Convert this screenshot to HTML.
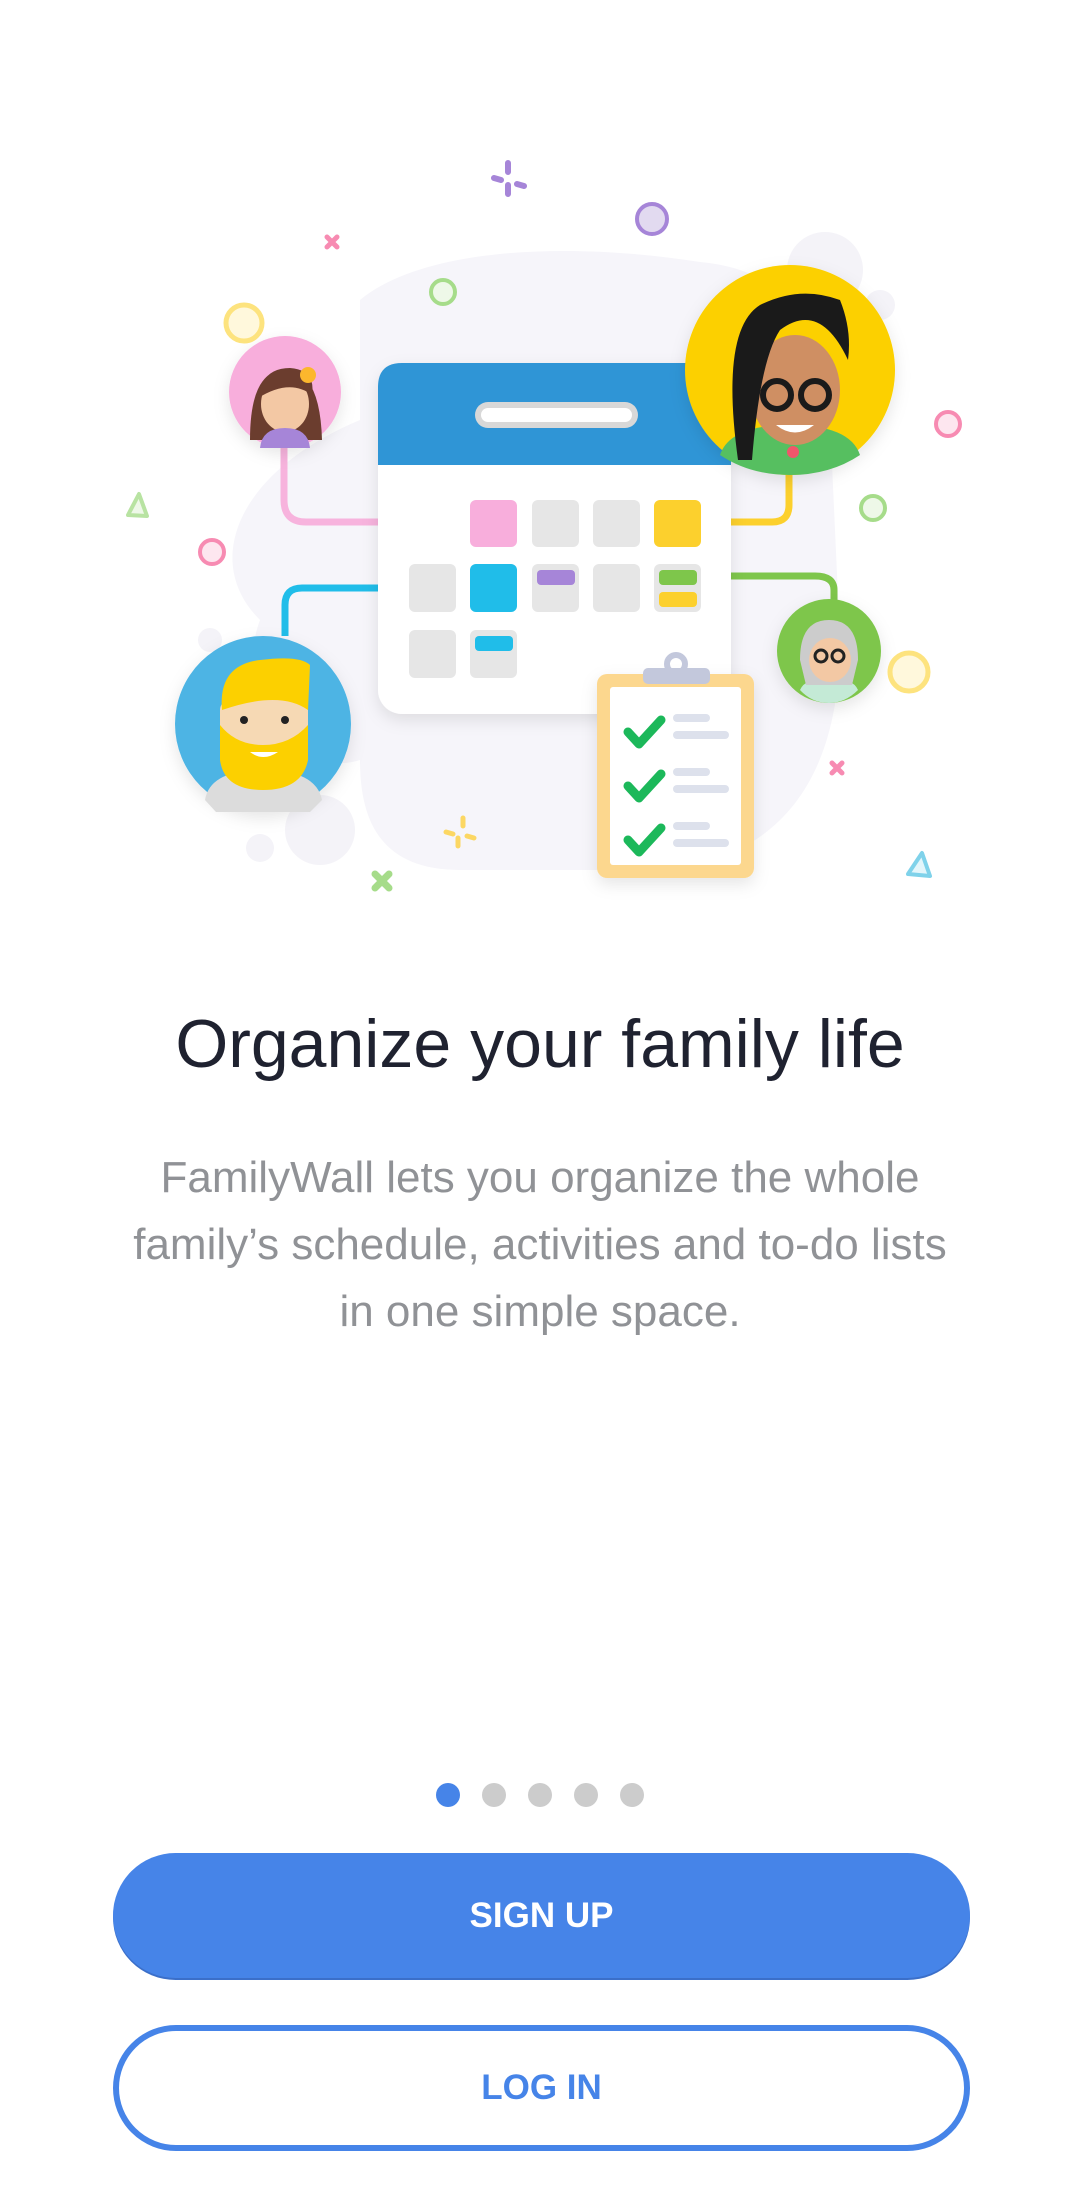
<!DOCTYPE html>
<html><head><meta charset="utf-8"><style>
html,body{margin:0;padding:0;background:#fff;}
body{width:1080px;height:2190px;position:relative;overflow:hidden;font-family:"Liberation Sans",Roboto,sans-serif;}
svg.ill{position:absolute;left:0;top:0;}
h1{position:absolute;top:1005px;left:0;width:1080px;text-align:center;margin:0;font-size:68px;font-weight:500;color:#1f2230;}
p.d{position:absolute;top:1144px;left:60px;width:960px;text-align:center;margin:0;font-size:44px;line-height:67px;color:#909296;}
.dots{position:absolute;top:1783px;left:0;width:1080px;text-align:center;font-size:0;}
.dots span{display:inline-block;width:24px;height:24px;border-radius:50%;background:#cccccc;margin:0 11px;}
.dots span.a{background:#4684e8;}
.btn{position:absolute;left:113px;width:857px;box-sizing:border-box;border-radius:64px;text-align:center;font-weight:bold;font-size:35px;}
.s{top:1853px;height:125px;line-height:125px;background:#4684e8;color:#fff;box-shadow:0 2px 0 #3b6fc9;}
.l{top:2025px;height:126px;line-height:114px;border:6px solid #4684e8;color:#4684e8;background:#fff;}
</style></head><body>
<svg class="ill" width="1080" height="900" viewBox="0 0 1080 900">
<defs><filter id="sh" x="-20%" y="-20%" width="140%" height="140%"><feDropShadow dx="0" dy="6" stdDeviation="8" flood-color="#000" flood-opacity="0.10"/></filter></defs>
<path d="M360 300 C420 250 560 240 700 262 C790 270 830 330 830 420 L840 640 C840 800 760 870 640 870 L460 870 C380 870 360 820 360 760 C300 780 230 700 260 620 C200 560 240 470 360 420 Z" fill="#f6f5fa"/>
<circle cx="825" cy="270" r="38" fill="#f4f3f8"/><circle cx="880" cy="305" r="15" fill="#f4f3f8"/>
<circle cx="320" cy="830" r="35" fill="#f4f3f8"/><circle cx="260" cy="848" r="14" fill="#f4f3f8"/><circle cx="210" cy="640" r="12" fill="#f4f3f8"/>
<path d="M284 445 L284 500 Q284 522 306 522 L470 522" stroke="#f7b3dd" stroke-width="7" fill="none"/>
<path d="M789 475 L789 505 Q789 522 772 522 L700 522" stroke="#fcd02d" stroke-width="7" fill="none"/>
<path d="M285 636 L285 605 Q285 588 302 588 L470 588" stroke="#20bde9" stroke-width="7" fill="none"/>
<path d="M834 600 L834 590 Q834 576 815 576 L695 576" stroke="#7ec64b" stroke-width="7" fill="none"/>
<g filter="url(#sh)"><rect x="378" y="363" width="353" height="351" rx="24" fill="#fff"/></g>
<path d="M378 465 L378 387 Q378 363 402 363 L707 363 Q731 363 731 387 L731 465 Z" fill="#2f95d6"/>
<line x1="488" y1="415" x2="625" y2="415" stroke="#d8d8d8" stroke-width="26" stroke-linecap="round"/>
<line x1="488" y1="415" x2="625" y2="415" stroke="#fff" stroke-width="14" stroke-linecap="round"/>
<g fill="#e6e6e6">
<rect x="532" y="500" width="47" height="47" rx="6"/><rect x="593" y="500" width="47" height="47" rx="6"/>
<rect x="409" y="564" width="47" height="48" rx="6"/><rect x="532" y="564" width="47" height="48" rx="6"/><rect x="593" y="564" width="47" height="48" rx="6"/><rect x="654" y="564" width="47" height="48" rx="6"/>
<rect x="409" y="630" width="47" height="48" rx="6"/><rect x="470" y="630" width="47" height="48" rx="6"/>
</g>
<rect x="470" y="500" width="47" height="47" rx="6" fill="#f8aedc"/>
<rect x="654" y="500" width="47" height="47" rx="6" fill="#fcd02d"/>
<rect x="470" y="564" width="47" height="48" rx="6" fill="#20bde9"/>
<rect x="537" y="570" width="38" height="15" rx="4" fill="#a685d8"/>
<rect x="659" y="570" width="38" height="15" rx="4" fill="#7ec64b"/>
<rect x="659" y="592" width="38" height="15" rx="4" fill="#fcd02d"/>
<rect x="475" y="636" width="38" height="15" rx="4" fill="#20bde9"/>
<g filter="url(#sh)"><rect x="597" y="674" width="157" height="204" rx="10" fill="#fcd78e"/></g>
<rect x="610" y="687" width="131" height="178" rx="3" fill="#fff"/>
<circle cx="676" cy="664" r="9" fill="none" stroke="#c3c8dc" stroke-width="6"/>
<rect x="643" y="668" width="67" height="16" rx="5" fill="#c3c8dc"/>
<g stroke="#1cb85a" stroke-width="9" fill="none" stroke-linecap="round" stroke-linejoin="round">
<path d="M628 732 l11 12 l22 -24"/><path d="M628 786 l11 12 l22 -24"/><path d="M628 840 l11 12 l22 -24"/></g>
<g fill="#dde1ec"><rect x="673" y="768" width="37" height="8" rx="4"/><rect x="673" y="785" width="56" height="8" rx="4"/>
<rect x="673" y="822" width="37" height="8" rx="4"/><rect x="673" y="714" width="37" height="8" rx="4"/><rect x="673" y="731" width="56" height="8" rx="4"/><rect x="673" y="839" width="56" height="8" rx="4"/></g>
<g filter="url(#sh)"><circle cx="285" cy="392" r="56" fill="#f8aedc"/></g>
<path d="M250 440 Q250 370 285 370 Q320 370 322 440 Z" fill="#6b3d2e"/>
<ellipse cx="285" cy="404" rx="24" ry="28" fill="#f3c8a4"/>
<path d="M258 398 Q262 368 290 368 Q316 370 312 395 Q290 378 258 398Z" fill="#6b3d2e"/>
<path d="M260 448 Q262 428 285 428 Q308 428 310 448 Z" fill="#a685d8"/>
<circle cx="308" cy="375" r="8" fill="#fcb72d"/>
<g filter="url(#sh)"><circle cx="790" cy="370" r="105" fill="#fcd000"/></g>
<path d="M720 455 Q730 425 790 425 Q850 425 860 455 Q830 475 790 475 Q750 475 720 455Z" fill="#56bf60"/>
<ellipse cx="795" cy="390" rx="45" ry="55" fill="#cf8f63"/>
<path d="M738 460 Q720 330 760 305 Q800 285 840 300 Q852 330 848 360 Q820 300 780 330 Q760 360 752 460Z" fill="#1a1a1a"/>
<circle cx="777" cy="395" r="14" fill="none" stroke="#1a1a1a" stroke-width="6"/><circle cx="815" cy="395" r="14" fill="none" stroke="#1a1a1a" stroke-width="6"/>
<path d="M776 425 Q795 440 814 425Z" fill="#fff"/>
<circle cx="793" cy="452" r="6" fill="#f1566b"/>
<g filter="url(#sh)"><circle cx="263" cy="724" r="88" fill="#4db4e4"/></g>
<path d="M205 800 Q210 770 263 770 Q316 770 322 800 L310 812 L216 812Z" fill="#dcdcdc"/>
<rect x="220" y="700" width="88" height="50" rx="10" fill="#f6d9b4"/>
<path d="M220 725 L220 760 Q224 790 263 790 Q302 790 308 760 L308 725 Q290 745 263 745 Q236 745 220 725Z" fill="#fcd000"/>
<path d="M222 710 Q218 665 260 660 Q300 655 310 665 L308 710 Q280 690 222 710Z" fill="#fcd000"/>
<circle cx="244" cy="720" r="4" fill="#222"/><circle cx="285" cy="720" r="4" fill="#222"/>
<path d="M250 752 Q263 762 278 752Z" fill="#fff"/>
<g filter="url(#sh)"><circle cx="829" cy="651" r="52" fill="#7ec64b"/></g>
<path d="M800 690 Q805 678 829 678 Q853 678 858 690 Q845 703 829 703 Q812 703 800 690Z" fill="#c4ead6"/>
<path d="M800 660 Q800 620 829 620 Q858 620 858 660 L852 685 L806 685Z" fill="#cccccc"/>
<ellipse cx="830" cy="660" rx="21" ry="22" fill="#f3c8a4"/>
<circle cx="821" cy="656" r="6" fill="none" stroke="#222" stroke-width="3"/><circle cx="838" cy="656" r="6" fill="none" stroke="#222" stroke-width="3"/>
<g fill="none" stroke-width="4">
<circle cx="244" cy="323" r="18" stroke="#fde37e" fill="#fff8dc" stroke-width="5"/>
<circle cx="652" cy="219" r="15" stroke="#a685d8" fill="#e2daf0"/>
<circle cx="443" cy="292" r="12" stroke="#a6dc8a" fill="#eef8e8"/>
<circle cx="948" cy="424" r="12" stroke="#f78bb2" fill="#fde6ef"/>
<circle cx="873" cy="508" r="12" stroke="#a6dc8a" fill="#eef8e8"/>
<circle cx="212" cy="552" r="12" stroke="#f78bb2" fill="#fde6ef"/>
<circle cx="909" cy="672" r="19" stroke="#fde37e" fill="#fff8dc" stroke-width="5"/>
<path d="M128 515 L139 494 L147 516Z" stroke="#b8e3a2" fill="#eef8e8" stroke-linejoin="round"/>
<path d="M908 874 L922 853 L930 876Z" stroke="#7fd2ea" fill="#e3f6fb" stroke-linejoin="round"/>
</g>
<g stroke-linecap="round" stroke-width="5">
<path d="M327 237 l10 10 M337 237 l-10 10" stroke="#f78bb2"/>
<path d="M832 763 l10 10 M842 763 l-10 10" stroke="#f78bb2"/>
<path d="M375 874 l14 14 M389 874 l-14 14" stroke="#a6dc8a" stroke-width="7"/>
<path d="M508 163 l0 9 M508 185 l0 9 M494 178 l7 2 M517 184 l7 2" stroke="#a685d8" stroke-width="6"/>
<path d="M463 818 l0 8 M458 838 l0 8 M446 832 l7 2 M467 836 l7 2" stroke="#fcd763" stroke-width="5"/>
</g>
</svg>
<h1>Organize your family life</h1>
<p class="d">FamilyWall lets you organize the whole<br>family’s schedule, activities and to-do lists<br>in one simple space.</p>
<div class="dots"><span class="a"></span><span></span><span></span><span></span><span></span></div>
<div class="btn s">SIGN UP</div>
<div class="btn l">LOG IN</div>
</body></html>
